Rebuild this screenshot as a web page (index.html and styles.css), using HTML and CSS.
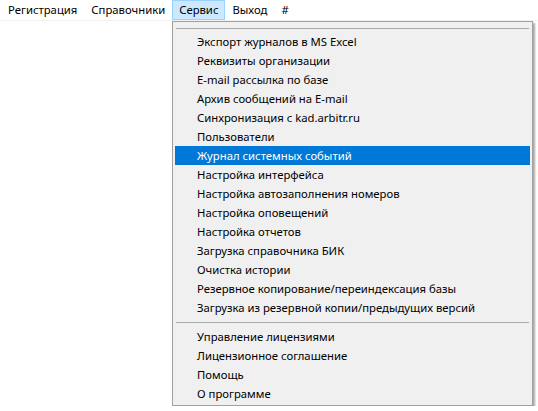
FILE: index.html
```html
<!DOCTYPE html>
<html lang="ru">
<head>
<meta charset="utf-8">
<title>Меню</title>
<link rel="stylesheet" href="styles.css">
</head>
<body>
<nav class="menubar">
  <div class="bar-item">Регистрация</div>
  <div class="bar-item">Справочники</div>
  <div class="bar-item open">Сервис</div>
  <div class="bar-item">Выход</div>
  <div class="bar-item">#</div>
</nav>
<div class="dropdown">
  <div class="sep sep-top"></div>
  <div class="item">Экспорт журналов в MS Excel</div>
  <div class="item">Реквизиты организации</div>
  <div class="item">E-mail рассылка по базе</div>
  <div class="item">Архив сообщений на E-mail</div>
  <div class="item">Синхронизация с kad.arbitr.ru</div>
  <div class="item">Пользователи</div>
  <div class="item active">Журнал системных событий</div>
  <div class="item">Настройка интерфейса</div>
  <div class="item">Настройка автозаполнения номеров</div>
  <div class="item">Настройка оповещений</div>
  <div class="item">Настройка отчетов</div>
  <div class="item">Загрузка справочника БИК</div>
  <div class="item">Очистка истории</div>
  <div class="item">Резервное копирование/переиндексация базы</div>
  <div class="item">Загрузка из резервной копии/предыдущих версий</div>
  <div class="sep"></div>
  <div class="item">Управление лицензиями</div>
  <div class="item">Лицензионное соглашение</div>
  <div class="item">Помощь</div>
  <div class="item">О программе</div>
</div>
</body>
</html>
```
FILE: styles.css
```css
html, body {
  margin: 0;
  padding: 0;
  background: #ffffff;
}
body {
  font-family: "Noto Sans", "Segoe UI", sans-serif;
  font-size: 11.3px;
  color: #000000;
}
.menubar {
  display: flex;
  align-items: stretch;
  height: 20px;
  padding-left: 1px;
  border-bottom: 1px solid #f2f2f2;
}
.bar-item {
  padding: 0 6px;
  line-height: 18px;
  height: 20px;
  box-sizing: border-box;
  border: 1px solid transparent;
  white-space: nowrap;
}
.bar-item.open {
  background: #cce8ff;
  border-color: #99d1ff;
}
.dropdown {
  margin-left: 172px;
  width: 361px;
  box-sizing: border-box;
  background: #f0f0f0;
  border: 1px solid #a0a0a0;
  padding: 2px;
  box-shadow: 2px 2px 2px rgba(0, 0, 0, 0.35);
  display: flex;
  flex-direction: column;
}
.sep {
  height: 10px;
  display: flex;
  align-items: center;
  padding: 0 1px;
}
.sep.sep-top {
  height: 8px;
}
.sep::after {
  content: "";
  flex: 1;
  height: 1px;
  background: #a8a8a8;
}
.item {
  height: 19px;
  line-height: 19px;
  padding-left: 22px;
  white-space: nowrap;
}
.item.active {
  background: #0078d7;
  color: #ffffff;
}
```
